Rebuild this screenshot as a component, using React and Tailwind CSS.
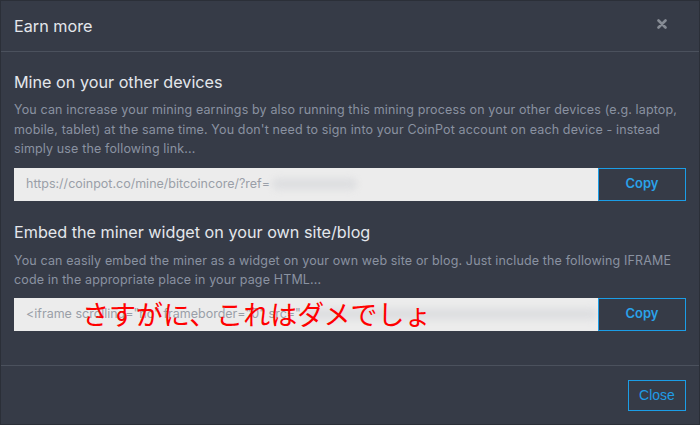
import React from "react";

const font = { fontFamily: "Inter, 'Noto Sans', sans-serif" };

function CopyRow({ children, overlay }) {
  return (
    <div className="relative flex h-[33px]">
      <div className="flex-1 bg-[#ececec] flex items-center pl-[12px] overflow-hidden text-[12.5px] text-[#9a9fa8] whitespace-nowrap">
        {children}
      </div>
      <button className="w-[88px] border border-[#1b9de6] text-[#2aa2ea] text-[13px] font-semibold flex items-center justify-center">
        Copy
      </button>
      {overlay}
    </div>
  );
}

export default function App() {
  return (
    <div
      className="w-[700px] h-[425px] bg-[#363b47] border border-[#2b2f38] flex flex-col"
      style={font}
    >
      <div className="h-[51px] px-[13px] flex items-center justify-between border-b border-[#4b515d] shrink-0">
        <div className="text-[16.2px] text-[#e4e7ec] pt-[1px]">Earn more</div>
        <svg width="10" height="10" viewBox="0 0 10 10" className="mr-[19px] mt-[-5px]">
          <path d="M1.5 1.5 L8.5 8.5 M8.5 1.5 L1.5 8.5" stroke="#868b94" strokeWidth="2.6" strokeLinecap="round" />
        </svg>
      </div>

      <div className="flex-1 px-[13px] pt-[18px]">
        <div className="text-[16.2px] leading-[24px] text-[#e4e7ec]">Mine on your other devices</div>
        <div className="mt-[6px] text-[12.5px] tracking-[0.14px] leading-[19.5px] text-[#8a92a1] whitespace-nowrap">
          You can increase your mining earnings by also running this mining process on your other devices (e.g. laptop,
          <br />
          mobile, tablet) at the same time. You don't need to sign into your CoinPot account on each device - instead
          <br />
          simply use the following link...
        </div>
        <div className="mt-[9px]">
          <CopyRow>
            <span>https://coinpot.co/mine/bitcoincore/?ref=</span>
            <span className="ml-[2px] inline-block w-[85px] h-[12px] rounded-full bg-[#dedfe1] blur-[3px]" />
          </CopyRow>
        </div>

        <div className="mt-[19px] text-[16.2px] leading-[24px] text-[#e4e7ec]">
          Embed the miner widget on your own site/blog
        </div>
        <div className="mt-[7px] text-[12.5px] tracking-[0.14px] leading-[19.5px] text-[#8a92a1] whitespace-nowrap">
          You can easily embed the miner as a widget on your own web site or blog. Just include the following IFRAME
          <br />
          code in the appropriate place in your page HTML...
        </div>
        <div className="mt-[8px]">
          <CopyRow
            overlay={
              <span
                className="absolute left-[68px] top-[-1px] text-[27px] leading-[34px] text-[#ff0000] whitespace-nowrap"
                style={{ fontFamily: "'Noto Sans CJK JP', sans-serif" }}
              >
                さすがに、これはダメでしょ
              </span>
            }
          >
            <span>&lt;iframe scrolling="no" frameborder="0" src="</span>
            <span className="ml-[4px] inline-block w-[300px] h-[12px] rounded-full bg-[#dedfe1] blur-[3px]" />
          </CopyRow>
        </div>
      </div>

      <div className="h-[59px] border-t border-[#4b515d] flex items-center justify-end px-[13px] shrink-0">
        <button
          className="w-[58px] h-[31px] border border-[#1b9de6] text-[#1f9ce6] text-[14px] flex items-center justify-center"
          style={{ fontFamily: "'Liberation Sans', Arial, sans-serif" }}
        >
          Close
        </button>
      </div>
    </div>
  );
}
